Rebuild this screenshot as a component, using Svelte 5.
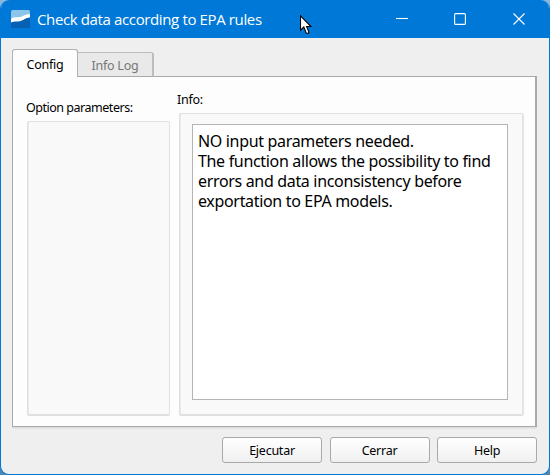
<script>
  let active = $state('Config');
  const tabs = ['Config', 'Info Log'];
  const actions = ['Ejecutar', 'Cerrar', 'Help'];
  const info = [
    'NO input parameters needed.',
    'The function allows the possibility to find',
    'errors and data inconsistency before',
    'exportation to EPA models.'
  ];
</script>

<div class="desktop">
  <div class="window">
    <header>
      <svg class="logo" width="19" height="18" viewBox="0 0 19 18">
        <rect width="19" height="18" rx="1.5" fill="#0860b4" />
        <path d="M1.5 0H17.5Q19 0 19 1.5V8H0V1.5Q0 0 1.5 0Z" fill="#8bc5e9" />
        <path d="M0 8.4C3 6.8 6 7.6 9 7C13 6.2 14 4 19 4.2V7.5C15 7.5 13 10.6 9 11.2C6 11.7 3 11.2 0 12.5Z" fill="#fff" />
        <path d="M19 7.4C15 7.5 13 10.6 9 11.2V12H19Z" fill="#0860b4" />
      </svg>
      <h1>Check data according to EPA rules</h1>
      <div class="controls">
        <svg width="12" height="12"><path d="M0 5.5H12" /></svg>
        <svg width="12" height="12"><rect x=".6" y=".6" width="10.8" height="10.8" rx="1" /></svg>
        <svg width="12" height="12"><path d="M.5.5L11.5 11.5M11.5.5L.5 11.5" /></svg>
      </div>
    </header>
    <main>
      <nav>
        {#each tabs as tab}
          <button class="tab" class:active={active === tab} onclick={() => (active = tab)}>{tab}</button>
        {/each}
      </nav>
      <section class="pane">
        <div class="options">
          <div class="label">Option parameters:</div>
          <div class="group"></div>
        </div>
        <div class="details">
          <div class="caption">Info:</div>
          <div class="group">
            <div class="text">
              {#each info as line}<p>{line}</p>{/each}
            </div>
          </div>
        </div>
      </section>
      <footer>
        {#each actions as action}<button class="action">{action}</button>{/each}
      </footer>
    </main>
  </div>
  <svg class="pointer" width="12" height="20" viewBox="0 0 12 20">
    <path d="M.5.8V15.2L3.8 12L6.3 18.3H8.7V16.6L6.6 11.5H11Z" fill="#fff" stroke="#000" stroke-width="1.1" />
  </svg>
</div>

<style>
  :global(body) { margin: 0; }
  .desktop {
    position: relative;
    width: 550px;
    height: 475px;
    overflow: hidden;
    background: linear-gradient(#8ab7dc, #4e86b4);
    font: 12.5px/16px "Noto Sans", sans-serif;
    letter-spacing: -0.25px;
    color: #000;
  }
  .window {
    box-sizing: border-box;
    height: 475px;
    border: 1px solid #0078d7;
    border-top: 0;
    border-radius: 9px;
    overflow: hidden;
    background: #efefef;
    display: flex;
    flex-direction: column;
  }
  header {
    height: 38px;
    flex: none;
    box-sizing: border-box;
    padding: 0 24px 0 9.5px;
    display: flex;
    align-items: center;
    background: #0078d7;
  }
  .logo { margin-right: 7.5px; }
  h1 {
    margin: 0;
    font: 15px/20px "Open Sans", sans-serif;
    letter-spacing: -0.37px;
    white-space: nowrap;
    color: #fff;
  }
  .controls { margin-left: auto; display: flex; gap: 47px; }
  .controls svg:first-child { margin-right: -1px; }
  .controls svg { fill: none; stroke: #fff; stroke-width: 1.1; }
  main { flex: 1; padding: 11px 12px 0 11px; display: flex; flex-direction: column; }
  nav { display: flex; align-items: flex-end; height: 28px; position: relative; z-index: 1; margin-bottom: -1px; }
  button { font: inherit; letter-spacing: inherit; box-sizing: border-box; padding: 2px 0 0; color: #000; }
  .tab {
    width: 76px;
    height: 25px;
    border: 1px solid #bdbdbd;
    border-width: 1px 2px 1px 0;
    border-bottom-color: #a9a9a9;
    border-radius: 0 3px 0 0;
    background: #e9e9e9;
    color: #777;
  }
  .tab.active {
    width: 66px;
    height: 28px;
    border: 1px solid #b0b0b0;
    border-bottom: 0;
    border-radius: 3px 3px 0 0;
    background: #fdfdfd;
    color: #000;
  }
  .pane {
    box-sizing: border-box;
    height: 351px;
    border: 1px solid #a9a9a9;
    border-right: 2px solid #a9a9a9;
    box-shadow: 0 2px 0 -1px #ddd, 0 2px 0 #e4e4e4;
    background: #fdfdfd;
    padding: 15px 11px 10px 14px;
    display: flex;
    gap: 9px;
  }
  .options { width: 143px; display: flex; flex-direction: column; }
  .label { margin: 8px 0 5px -1px; white-space: nowrap; letter-spacing: -0.48px; }
  .details { flex: 1; display: flex; flex-direction: column; }
  .caption { margin: 0 0 5px -2px; }
  .group {
    flex: 1;
    box-sizing: border-box;
    border: 1px solid #e0e0e0;
    border-bottom-width: 2px;
    border-radius: 2px;
    background: #f9f9f9;
    box-shadow: inset 1px 0 0 #eaeaea;
  }
  .details .group { padding: 10px 14px 14px 12px; border-right: 2px solid #e4e4e4; }
  .text {
    box-sizing: border-box;
    height: 100%;
    border: 1px solid #b4b4b4;
    background: #fff;
    padding: 6px 5px;
    font-size: 16px;
    line-height: 20px;
    letter-spacing: -0.33px;
  }
  p { margin: 0; white-space: nowrap; }
  footer { display: flex; justify-content: flex-end; gap: 7.5px; margin-top: 10px; }
  .action {
    width: 100px;
    height: 26px;
    border: 1px solid #a9a9a9;
    border-radius: 3px;
    background: linear-gradient(#fff, #f0f0f0);
  }
  .pointer { position: absolute; left: 300px; top: 15px; }
</style>
